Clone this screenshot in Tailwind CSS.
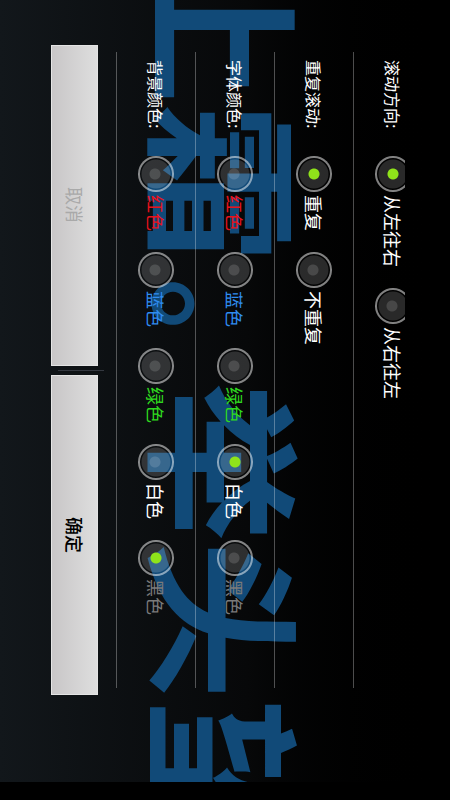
<!DOCTYPE html>
<html lang="zh-CN">
<head>
    <meta charset="UTF-8">
    <meta name="viewport" content="width=device-width, initial-scale=1.0">
    <title>滚动字幕</title>
    <script src="https://cdn.jsdelivr.net/npm/@tailwindcss/browser@4"></script>
</head>
<body class="h-screen bg-black pb-[18px] font-['Noto_Sans_CJK_SC',sans-serif] text-white">

    <!-- The whole screen reads sideways: lines run down, rows stack from right to left -->
    <main class="relative h-full w-full overflow-hidden bg-linear-to-r from-[#12171b] via-[#070809] via-55% to-black [writing-mode:vertical-rl] [text-orientation:sideways]">

        <!-- SCROLLING TEXT -->
        <p class="absolute -top-[54px] left-[140px] text-[158px] leading-[158px] font-bold whitespace-nowrap text-[#114a78]">上霜<span class="inline-block h-[121px] pt-4 text-[132px]">。</span>举头望</p>

        <form class="relative h-full w-full pt-[45px] pr-[45px] pb-[87px]">

            <!-- SETTINGS -->
            <div class="h-full overflow-hidden pt-[7px] pb-[7px] [&_input]:size-9 [&_input]:shrink-0 [&_input]:appearance-none [&_input]:rounded-full [&_input]:border-2 [&_input]:border-white/50 [&_input]:bg-[radial-gradient(circle_at_15px_16px,rgb(255_255_255/0.14)_5px,transparent_6px),radial-gradient(circle,rgb(255_255_255/0.16)_14px,transparent_15px)] [&_input:checked]:bg-[radial-gradient(circle,#8fe31a_5px,rgb(255_255_255/0.16)_6px,rgb(255_255_255/0.16)_14px,transparent_15px)] [&_label]:flex [&_label]:items-center [&_label]:gap-[3px]">

                <!-- DIRECTION -->
                <div role="radiogroup" aria-labelledby="direction" class="-mr-[27px] flex h-full w-[79px] items-center border-l border-white/30 pt-2">
                    <span id="direction" class="h-24 shrink-0">滚动方向:</span>
                    <div class="flex items-center gap-[21px] text-lg leading-5 whitespace-nowrap">
                        <label><input type="radio" name="direction" checked>从左往右</label>
                        <label><input type="radio" name="direction">从右往左</label>
                    </div>
                </div>

                <!-- REPEAT -->
                <div role="radiogroup" aria-labelledby="repeat" class="flex h-full w-[79px] items-center border-l border-white/30 pt-2">
                    <span id="repeat" class="h-24 shrink-0">重复滚动:</span>
                    <div class="flex items-center gap-[21px] text-lg leading-5 whitespace-nowrap">
                        <label><input type="radio" name="repeat" checked>重复</label>
                        <label><input type="radio" name="repeat">不重复</label>
                    </div>
                </div>

                <!-- FONT COLOR -->
                <div role="radiogroup" aria-labelledby="font-color" class="flex h-full w-[79px] items-center border-l border-white/30 pt-2">
                    <span id="font-color" class="h-24 shrink-0">字体颜色:</span>
                    <div class="flex items-center gap-[21px] text-lg leading-5 whitespace-nowrap">
                        <label class="text-[#e8121c]"><input type="radio" name="font-color">红色</label>
                        <label class="text-[#2f8cf0]"><input type="radio" name="font-color">蓝色</label>
                        <label class="text-[#2fd81f]"><input type="radio" name="font-color">绿色</label>
                        <label><input type="radio" name="font-color" checked>白色</label>
                        <label class="text-[#7a7a7a]"><input type="radio" name="font-color">黑色</label>
                    </div>
                </div>

                <!-- BACKGROUND COLOR -->
                <div role="radiogroup" aria-labelledby="back-color" class="flex h-full w-[79px] items-center border-l border-white/30 pt-2">
                    <span id="back-color" class="h-24 shrink-0">背景颜色:</span>
                    <div class="flex items-center gap-[21px] text-lg leading-5 whitespace-nowrap">
                        <label class="text-[#e8121c]"><input type="radio" name="back-color">红色</label>
                        <label class="text-[#2f8cf0]"><input type="radio" name="back-color">蓝色</label>
                        <label class="text-[#2fd81f]"><input type="radio" name="back-color">绿色</label>
                        <label><input type="radio" name="back-color">白色</label>
                        <label class="text-[#7a7a7a]"><input type="radio" name="back-color" checked>黑色</label>
                    </div>
                </div>

            </div>

            <!-- BUTTONS -->
            <div class="mr-3 flex h-full w-[53px] items-end gap-1 text-lg">
                <button type="button" class="w-[47px] flex-1 border border-[#e4e4e4] bg-linear-to-r from-[#c8c6c7] to-[#dedede] text-[#a9a9a9]">取消</button>
                <span class="h-px w-[46px] self-start bg-[#343840]"></span>
                <button type="submit" class="w-[47px] flex-1 border border-[#e4e4e4] bg-linear-to-r from-[#c8c6c7] to-[#dedede] font-medium text-black">确定</button>
            </div>

        </form>
    </main>

</body>
</html>
